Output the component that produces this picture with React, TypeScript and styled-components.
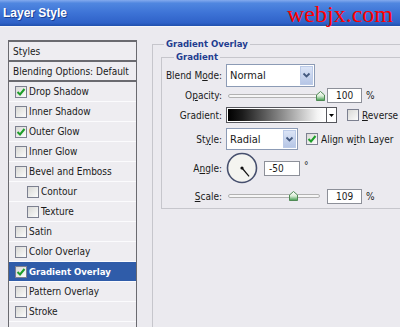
import React from "react";
import styled, { createGlobalStyle } from "styled-components";

const GlobalStyle = createGlobalStyle`
  html, body {
    margin: 0;
    padding: 0;
  }
  body {
    width: 400px;
    height: 327px;
    overflow: hidden;
    background: #ebeaef;
    font-family: "DejaVu Sans Condensed", "Liberation Sans", sans-serif;
    font-size: 10px;
    color: #1a1a1a;
  }
`;

const Window = styled.div`
  width: 400px;
  height: 327px;
  display: flex;
  flex-direction: column;
  overflow: hidden;
`;

const TitleBar = styled.div`
  height: 26px;
  flex: none;
  display: flex;
  align-items: center;
  justify-content: space-between;
  padding: 0 7px 0 3px;
  background: linear-gradient(#84aaee 0, #5087e0 12%, #3d73d6 50%, #2f62c8 88%, #2150ad 100%);
  border-bottom: 1px solid #f6f6f8;
`;

const Caption = styled.span`
  font-family: "Liberation Sans", sans-serif;
  font-weight: bold;
  font-size: 12px;
  color: #fff;
  text-shadow: 1px 1px 0 #1c3f92;
`;

const Watermark = styled.span`
  font-family: "Liberation Serif", serif;
  font-size: 24px;
  line-height: 24px;
  margin-top: 2px;
  color: #ff0000;
`;

const Main = styled.div`
  flex: 1;
  min-height: 0;
  display: flex;
  padding-left: 8px;
`;

const StylesPanel = styled.div`
  width: 129px;
  flex: none;
  box-sizing: border-box;
  margin-top: 13px;
  border: 1px solid #6a6a70;
  border-top-width: 2px;
  border-bottom: none;
  background: #eeedf1;
`;

const PanelHead = styled.div`
  height: 18px;
  display: flex;
  align-items: center;
  padding-left: 4px;
  border-bottom: 2px solid #6a6a70;
`;

const StyleRow = styled.div<{ $indent?: boolean; $active?: boolean }>`
  height: 19px;
  display: flex;
  align-items: center;
  gap: 2px;
  padding-left: ${(p) => (p.$indent ? 18 : 6)}px;
  border-bottom: 1px solid #fbfbfd;
  background: ${(p) => (p.$active ? "#2f5ca9" : "transparent")};
  color: ${(p) => (p.$active ? "#fff" : "#1a1a1a")};
  font-weight: ${(p) => (p.$active ? "bold" : "normal")};
  font-size: ${(p) => (p.$active ? "9.5px" : "10px")};
`;

const Box = styled.span`
  width: 12px;
  height: 12px;
  flex: none;
  box-sizing: border-box;
  border: 1px solid #7c8090;
  background: linear-gradient(135deg, #d9d9d6, #fbfbfb);
  display: flex;
  align-items: center;
  justify-content: center;
`;

const Settings = styled.div`
  flex: 1;
  min-width: 0;
  padding: 11px 0 0 15px;
`;

const Group = styled.fieldset<{ $inner?: boolean }>`
  margin: ${(p) => (p.$inner ? "1px 0 0 0" : "0 -30px 0 0")};
  min-width: 0;
  box-sizing: border-box;
  border: 1px solid #c6c6cc;
  padding: ${(p) => (p.$inner ? "0 0 4px 0" : "0 0 0 8px")};
  height: ${(p) => (p.$inner ? "auto" : "320px")};
`;

const Legend = styled.legend<{ $inner?: boolean }>`
  padding: 0 2px;
  margin-left: ${(p) => (p.$inner ? 12 : 3)}px;
  line-height: 12px;
  font-size: 9.5px;
  font-weight: bold;
  color: #1f3d90;
`;

const Row = styled.div<{ $h: number; $gap?: number }>`
  height: ${(p) => p.$h}px;
  margin-top: ${(p) => p.$gap ?? 0}px;
  display: flex;
  align-items: center;
`;

const Label = styled.span`
  width: 60px;
  flex: none;
  margin-right: 4px;
  text-align: right;
  white-space: nowrap;
`;

const Select = styled.div<{ $w: number; $h: number }>`
  width: ${(p) => p.$w}px;
  height: ${(p) => p.$h}px;
  box-sizing: border-box;
  border: 1px solid #8c9bb5;
  background: #fff;
  display: flex;
  align-items: center;
  justify-content: space-between;
  padding: 1px 1px 1px 3px;
  font-size: 11px;
`;

const DropButton = styled.span`
  width: 13px;
  align-self: stretch;
  box-sizing: border-box;
  border: 1px solid #bccbe8;
  background: linear-gradient(#dbe4f6, #b6c6e6);
  display: flex;
  align-items: center;
  justify-content: center;
`;

const Slider = styled.div`
  position: relative;
  width: 96px;
  height: 12px;
  flex: none;
  display: flex;
  align-items: center;
`;

const Track = styled.div`
  flex: 1;
  margin: 0 2px;
  height: 2px;
  border: 1px solid #b2b2b2;
  border-radius: 2px;
  background: #f6f6f6;
`;

const Thumb = styled.svg`
  position: absolute;
  top: 1px;
`;

const NumberBox = styled.div<{ $w: number; $ml: number; $pl?: number }>`
  width: ${(p) => p.$w}px;
  height: 15px;
  flex: none;
  box-sizing: border-box;
  margin-left: ${(p) => p.$ml}px;
  border: 1px solid #8d9099;
  background: #fff;
  display: flex;
  align-items: center;
  padding-left: ${(p) => p.$pl ?? 8}px;
`;

const Unit = styled.span<{ $top?: boolean }>`
  margin-left: 4px;
  align-self: ${(p) => (p.$top ? "flex-start" : "center")};
  margin-top: ${(p) => (p.$top ? 8 : 0)}px;
`;

const GradientPicker = styled.div`
  width: 111px;
  height: 16px;
  flex: none;
  box-sizing: border-box;
  border: 1px solid #55565c;
  display: flex;
  background: #fff;
`;

const GradientSwatch = styled.div`
  flex: 1;
  border: 1px solid #fff;
  background: linear-gradient(90deg, #000 0%, #1c1c1c 15%, #8a8a8a 55%, #f4f4f4 92%, #fff 100%);
`;

const SwatchArrow = styled.div`
  width: 9px;
  border-left: 1px solid #55565c;
  display: flex;
  align-items: center;
  justify-content: center;
`;

const Option = styled.label<{ $gap: number }>`
  display: flex;
  align-items: center;
  gap: 3px;
  margin-left: ${(p) => p.$gap}px;
  white-space: nowrap;
`;

const Dial = styled.svg`
  flex: none;
`;

function Check() {
  return (
    <svg width="10" height="10" viewBox="0 0 10 10">
      <path d="M1.5 5 L4 7.5 L8.5 2" fill="none" stroke="#1e9e2a" strokeWidth="2" />
    </svg>
  );
}

function CheckBox({ checked }: { checked?: boolean }) {
  return <Box>{checked && <Check />}</Box>;
}

function Chevron() {
  return (
    <svg width="9" height="7" viewBox="0 0 9 7">
      <path d="M1.5 1.5 L4.5 4.5 L7.5 1.5" fill="none" stroke="#44597f" strokeWidth="1.8" />
    </svg>
  );
}

function ValueSlider({ pos }: { pos: number }) {
  return (
    <Slider>
      <Track />
      <Thumb width="9" height="10" viewBox="0 0 9 10" style={{ left: `${2 + pos * 92 - 4.5}px` }}>
        <defs>
          <linearGradient id="thumbFill" x1="0" y1="0" x2="0" y2="1">
            <stop offset="0" stopColor="#ffffff" />
            <stop offset="0.5" stopColor="#d9ecd6" />
            <stop offset="1" stopColor="#3f9c4c" />
          </linearGradient>
        </defs>
        <path d="M0.5 4 L4.5 0.5 L8.5 4 V9.5 H0.5 Z" fill="url(#thumbFill)" stroke="#4f8a55" strokeWidth="1" />
      </Thumb>
    </Slider>
  );
}

const styleItems = [
  { name: "Drop Shadow", checked: true },
  { name: "Inner Shadow" },
  { name: "Outer Glow", checked: true },
  { name: "Inner Glow" },
  { name: "Bevel and Emboss" },
  { name: "Contour", indent: true },
  { name: "Texture", indent: true },
  { name: "Satin" },
  { name: "Color Overlay" },
  { name: "Gradient Overlay", checked: true, active: true },
  { name: "Pattern Overlay" },
  { name: "Stroke" },
];

export default function App() {
  const angle = (50 * Math.PI) / 180;
  return (
    <Window>
      <GlobalStyle />
      <TitleBar>
        <Caption>Layer Style</Caption>
        <Watermark>webjx.com</Watermark>
      </TitleBar>
      <Main>
        <StylesPanel>
          <PanelHead>Styles</PanelHead>
          <PanelHead>Blending Options: Default</PanelHead>
          {styleItems.map((item) => (
            <StyleRow key={item.name} $indent={item.indent} $active={item.active}>
              <CheckBox checked={item.checked} />
              {item.name}
            </StyleRow>
          ))}
          <StyleRow />
        </StylesPanel>
        <Settings>
          <Group>
            <Legend>Gradient Overlay</Legend>
            <Group $inner>
              <Legend $inner>Gradient</Legend>
              <Row $h={24}>
                <Label>
                  Blend M<u>o</u>de:
                </Label>
                <Select $w={89} $h={23}>
                  Normal
                  <DropButton>
                    <Chevron />
                  </DropButton>
                </Select>
              </Row>
              <Row $h={17}>
                <Label>
                  O<u>p</u>acity:
                </Label>
                <ValueSlider pos={1} />
                <NumberBox $w={35} $ml={5}>100</NumberBox>
                <Unit>%</Unit>
              </Row>
              <Row $h={18} $gap={2}>
                <Label>Gradient:</Label>
                <GradientPicker>
                  <GradientSwatch />
                  <SwatchArrow>
                    <svg width="5" height="3" viewBox="0 0 5 3">
                      <path d="M0 0 H5 L2.5 3 Z" fill="#000" />
                    </svg>
                  </SwatchArrow>
                </GradientPicker>
                <Option $gap={10}>
                  <CheckBox />
                  <span>
                    <u>R</u>everse
                  </span>
                </Option>
              </Row>
              <Row $h={22} $gap={4}>
                <Label>
                  St<u>y</u>le:
                </Label>
                <Select $w={72} $h={22}>
                  Radial
                  <DropButton>
                    <Chevron />
                  </DropButton>
                </Select>
                <Option $gap={8}>
                  <CheckBox checked />
                  <span>
                    Align w<u>i</u>th Layer
                  </span>
                </Option>
              </Row>
              <Row $h={32} $gap={2}>
                <Label>
                  A<u>n</u>gle:
                </Label>
                <Dial width="32" height="32" viewBox="0 0 32 32">
                  <circle cx="16" cy="16" r="14.5" fill="#f4f4f0" stroke="#47506e" strokeWidth="1.6" />
                  <line
                    x1="16"
                    y1="16"
                    x2={16 + 11 * Math.cos(angle)}
                    y2={16 + 11 * Math.sin(angle)}
                    stroke="#111"
                    strokeWidth="1.2"
                  />
                  <circle cx="16" cy="16" r="1.6" fill="#111" />
                </Dial>
                <NumberBox $w={36} $ml={6} $pl={4}>-50</NumberBox>
                <Unit $top>°</Unit>
              </Row>
              <Row $h={16} $gap={4}>
                <Label>
                  <u>S</u>cale:
                </Label>
                <ValueSlider pos={(109 - 10) / 140} />
                <NumberBox $w={35} $ml={5}>109</NumberBox>
                <Unit>%</Unit>
              </Row>
            </Group>
          </Group>
        </Settings>
      </Main>
    </Window>
  );
}
